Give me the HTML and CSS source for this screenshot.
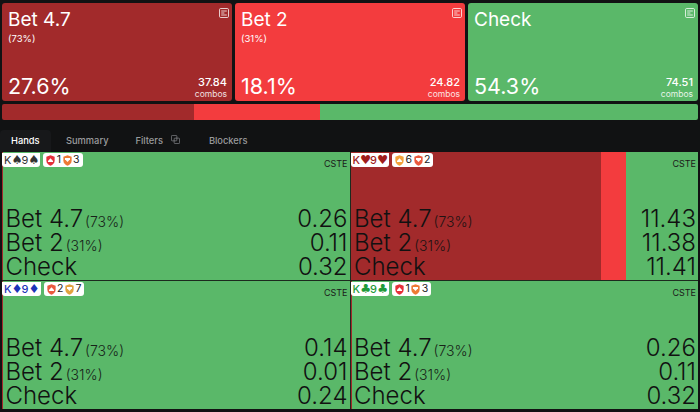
FILE: index.html
```html
<!DOCTYPE html>
<html lang="en">
<head>
    <meta charset="UTF-8">
    <meta name="viewport" content="width=device-width, initial-scale=1.0">
    <title>Strategy - Hands</title>
    <link rel="stylesheet" href="styles.css">
</head>
<body>
    <svg class="defs" width="0" height="0" aria-hidden="true">
        <symbol id="report" viewBox="0 0 10 10">
            <rect x="0.5" y="0.5" width="9" height="9" rx="1.2" fill="none" stroke="currentColor" stroke-width="0.9"/>
            <path d="M2.2 3h5.6M2.2 5h3.2M2.2 7h5.6" stroke="currentColor" stroke-width="0.9" fill="none"/>
        </symbol>
        <symbol id="shield-up" viewBox="0 0 10 12">
            <path d="M5 0.2 9.6 1.8V6.4C9.6 9 7.4 11 5 11.8 2.6 11 0.4 9 0.4 6.4V1.8Z" fill="currentColor"/>
            <path d="M2.2 6.6 5 3.6 7.8 6.6V7.8H2.2Z" fill="#fff"/>
        </symbol>
        <symbol id="shield-down" viewBox="0 0 10 12">
            <path d="M5 0.2 9.6 1.8V6.4C9.6 9 7.4 11 5 11.8 2.6 11 0.4 9 0.4 6.4V1.8Z" fill="currentColor"/>
            <path d="M2.2 3.2H7.8V4.6L5 7.6 2.2 4.6Z" fill="#fff"/>
        </symbol>
    </svg>

    <section class="actions">
        <div class="action action-bet-big">
            <div class="action-top">
                <div>
                    <div class="action-name">Bet 4.7</div>
                    <div class="action-size">(73%)</div>
                </div>
                <svg class="report-icon"><use href="#report"/></svg>
            </div>
            <div class="action-bottom">
                <div class="action-freq">27.6%</div>
                <div class="action-combos"><b>37.84</b><span>combos</span></div>
            </div>
        </div>
        <div class="action action-bet-small">
            <div class="action-top">
                <div>
                    <div class="action-name">Bet 2</div>
                    <div class="action-size">(31%)</div>
                </div>
                <svg class="report-icon"><use href="#report"/></svg>
            </div>
            <div class="action-bottom">
                <div class="action-freq">18.1%</div>
                <div class="action-combos"><b>24.82</b><span>combos</span></div>
            </div>
        </div>
        <div class="action action-check">
            <div class="action-top">
                <div>
                    <div class="action-name">Check</div>
                </div>
                <svg class="report-icon"><use href="#report"/></svg>
            </div>
            <div class="action-bottom">
                <div class="action-freq">54.3%</div>
                <div class="action-combos"><b>74.51</b><span>combos</span></div>
            </div>
        </div>
    </section>

    <div class="range-bar">
        <div class="seg-big" style="width: 27.6%"></div>
        <div class="seg-small" style="width: 18.1%"></div>
        <div class="seg-check" style="flex: 1"></div>
    </div>

    <nav class="tabs">
        <div class="tab tab-active">Hands</div>
        <div class="tab tab-summary">Summary</div>
        <div class="tab tab-filters">Filters
            <svg class="copy-icon" viewBox="0 0 10 10"><rect x="0.5" y="0.5" width="6" height="6" rx="0.8"/><rect x="3.5" y="3.5" width="6" height="6" rx="0.8"/></svg>
        </div>
        <div class="tab tab-blockers">Blockers</div>
    </nav>

    <section class="hands">
        <article class="hand">
            <div class="hand-bars">
                <div class="seg-big" style="width: 1px"></div>
                <div class="seg-check" style="flex: 1"></div>
            </div>
            <div class="hand-body">
                <div class="hand-head">
                    <div class="chip suit-spade">K<i>♠</i>9<i>♠</i></div>
                    <div class="chip chip-blockers">
                        <svg class="shield c-red"><use href="#shield-up"/></svg>1
                        <svg class="shield c-orange"><use href="#shield-down"/></svg>3
                    </div>
                    <div class="hand-tag">CSTE</div>
                </div>
                <div class="ev-rows">
                    <div class="ev-row"><span>Bet 4.7<small>(73%)</small></span><span>0.26</span></div>
                    <div class="ev-row"><span>Bet 2<small>(31%)</small></span><span>0.11</span></div>
                    <div class="ev-row"><span>Check</span><span>0.32</span></div>
                </div>
            </div>
        </article>
        <article class="hand">
            <div class="hand-bars">
                <div class="seg-big" style="width: 72%"></div>
                <div class="seg-small" style="width: 7.2%"></div>
                <div class="seg-check" style="flex: 1"></div>
            </div>
            <div class="hand-body">
                <div class="hand-head">
                    <div class="chip suit-heart">K<i>♥</i>9<i>♥</i></div>
                    <div class="chip chip-blockers">
                        <svg class="shield c-amber"><use href="#shield-up"/></svg>6
                        <svg class="shield c-coral"><use href="#shield-down"/></svg>2
                    </div>
                    <div class="hand-tag">CSTE</div>
                </div>
                <div class="ev-rows">
                    <div class="ev-row"><span>Bet 4.7<small>(73%)</small></span><span>11.43</span></div>
                    <div class="ev-row"><span>Bet 2<small>(31%)</small></span><span>11.38</span></div>
                    <div class="ev-row"><span>Check</span><span>11.41</span></div>
                </div>
            </div>
        </article>
        <article class="hand">
            <div class="hand-bars">
                <div class="seg-big" style="width: 1px"></div>
                <div class="seg-check" style="flex: 1"></div>
            </div>
            <div class="hand-body">
                <div class="hand-head">
                    <div class="chip suit-diamond">K<i>♦</i>9<i>♦</i></div>
                    <div class="chip chip-blockers">
                        <svg class="shield c-coral"><use href="#shield-up"/></svg>2
                        <svg class="shield c-gold"><use href="#shield-down"/></svg>7
                    </div>
                    <div class="hand-tag">CSTE</div>
                </div>
                <div class="ev-rows">
                    <div class="ev-row"><span>Bet 4.7<small>(73%)</small></span><span>0.14</span></div>
                    <div class="ev-row"><span>Bet 2<small>(31%)</small></span><span>0.01</span></div>
                    <div class="ev-row"><span>Check</span><span>0.24</span></div>
                </div>
            </div>
        </article>
        <article class="hand">
            <div class="hand-bars">
                <div class="seg-big" style="width: 1px"></div>
                <div class="seg-check" style="flex: 1"></div>
            </div>
            <div class="hand-body">
                <div class="hand-head">
                    <div class="chip suit-club">K<i>♣</i>9<i>♣</i></div>
                    <div class="chip chip-blockers">
                        <svg class="shield c-red"><use href="#shield-up"/></svg>1
                        <svg class="shield c-orange"><use href="#shield-down"/></svg>3
                    </div>
                    <div class="hand-tag">CSTE</div>
                </div>
                <div class="ev-rows">
                    <div class="ev-row"><span>Bet 4.7<small>(73%)</small></span><span>0.26</span></div>
                    <div class="ev-row"><span>Bet 2<small>(31%)</small></span><span>0.11</span></div>
                    <div class="ev-row"><span>Check</span><span>0.32</span></div>
                </div>
            </div>
        </article>
    </section>
</body>
</html>
```

FILE: styles.css
```css
:root {
    --bet-big: #a22a2b;
    --bet-small: #f33c3e;
    --check: #5ab869;
    --bg: #111213;
}

* {
    margin: 0;
    padding: 0;
    box-sizing: border-box;
}

html, body {
    height: 412px;
    overflow: hidden;
}

body {
    font-family: Inter, "Noto Sans", sans-serif;
    background-color: var(--bg);
    color: #fff;
    padding: 3px 2px 0;
}

.defs {
    display: block;
    height: 0;
}

.actions {
    display: flex;
    gap: 3px;
    height: 98px;
}

.action {
    flex: 1;
    border-radius: 3px;
    padding: 2px 5px 1px 6px;
    display: flex;
    flex-direction: column;
    justify-content: space-between;
}

.action-bet-big { background-color: var(--bet-big); }
.action-bet-small { background-color: var(--bet-small); }
.action-check { background-color: var(--check); }

.action-top {
    display: flex;
    justify-content: space-between;
}

.action-name {
    font-size: 19px;
    line-height: 24px;
    margin-top: 3px;
}

.action-size {
    font-size: 9.5px;
    line-height: 12px;
    margin-top: 1px;
}

.report-icon {
    width: 10px;
    height: 10px;
    margin: 3px -2px 0 0;
    color: rgba(255, 255, 255, 0.85);
}

.action-bottom {
    display: flex;
    justify-content: space-between;
    align-items: flex-end;
}

.action-freq {
    font-size: 21.5px;
    line-height: 26px;
    margin-bottom: 1px;
}

.action-combos {
    display: flex;
    flex-direction: column;
    align-items: flex-end;
}

.action-combos b {
    font-size: 11px;
    font-weight: 500;
    line-height: 13px;
}

.action-combos span {
    font-size: 8.5px;
    line-height: 11px;
    opacity: 0.85;
}

.range-bar {
    display: flex;
    height: 16px;
    margin-top: 3px;
    border-radius: 2px;
    overflow: hidden;
}

.seg-big { background-color: var(--bet-big); }
.seg-small { background-color: var(--bet-small); }
.seg-check { background-color: var(--check); }

.tabs {
    display: flex;
    height: 22px;
    margin: 10px 0 0 -2px;
    font-size: 9.3px;
    font-weight: 500;
    color: #9a9b9d;
}

.tab {
    display: flex;
    align-items: center;
    padding-bottom: 1px;
}

.tab-active {
    width: 51px;
    padding-left: 11px;
    color: #fff;
    background-color: #17181a;
    border-radius: 4px 4px 0 0;
}

.tab-summary { margin-left: 15px; }
.tab-filters { margin-left: 27px; }
.tab-blockers { margin-left: 29px; }

.copy-icon {
    width: 9px;
    height: 9px;
    margin: 0 0 3px 8px;
    fill: none;
    stroke: #85868a;
    stroke-width: 0.8;
}

.hands {
    display: grid;
    grid-template-columns: 1fr 1fr;
    grid-template-rows: 128px 128px;
    gap: 1px;
    background-color: #1c2a1e;
}

.hand {
    display: grid;
    overflow: hidden;
}

.hand-bars, .hand-body {
    grid-area: 1 / 1;
    min-width: 0;
}

.hand-bars {
    display: flex;
}

.hand-body {
    display: flex;
    flex-direction: column;
    justify-content: space-between;
}

.hand-head {
    display: flex;
    align-items: flex-start;
    gap: 3px;
    padding-top: 1px;
}

.chip {
    display: flex;
    align-items: center;
    height: 14px;
    padding: 0 2px;
    background-color: #fff;
    border-radius: 0 0 3px 3px;
    font-size: 11px;
    line-height: 14px;
    color: #222;
}

.chip i {
    font-family: "DejaVu Sans", sans-serif;
    font-style: normal;
    font-size: 12.5px;
    width: 10px;
    text-align: center;
}

.chip-blockers {
    gap: 1.5px;
    padding: 0 3px;
    border-radius: 3px;
    font-size: 10.5px;
}

.suit-spade { color: #333; }
.suit-heart { color: #a01c1c; font-weight: 500; }
.suit-diamond { color: #1c34b8; font-weight: 500; }
.suit-club { color: #1f9a3a; font-weight: 500; }

.shield {
    width: 9px;
    height: 11px;
}

.c-red { color: #e5303a; }
.c-orange { color: #ee7a35; }
.c-amber { color: #f2a23c; }
.c-coral { color: #ea5a3f; }
.c-gold { color: #e2a33f; }

.hand-tag {
    margin-left: auto;
    padding: 5px 2px 0 0;
    font-size: 9px;
    line-height: 11px;
    color: #1a1a1a;
}

.ev-rows {
    padding: 0 2px 1px 3.5px;
}

.ev-row {
    display: flex;
    justify-content: space-between;
    align-items: baseline;
    height: 24px;
    font-size: 24px;
    font-weight: 300;
    line-height: 24px;
    color: #111;
}

.ev-row small {
    font-size: 14px;
    margin-left: 2px;
    opacity: 0.9;
}
```
